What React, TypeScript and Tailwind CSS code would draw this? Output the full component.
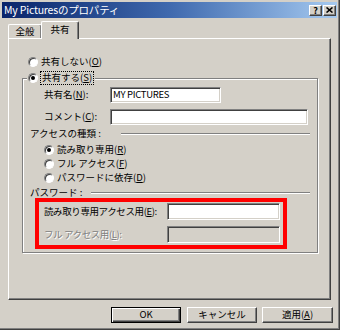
import React from "react";

const sunken =
  "border border-t-[#808080] border-l-[#808080] border-b-white border-r-white shadow-[inset_1px_1px_0_#404040,inset_-1px_-1px_0_#d4d0c8]";
const raised =
  "border border-t-white border-l-white border-b-[#404040] border-r-[#404040] shadow-[inset_-1px_-1px_0_#808080]";

function Radio({ checked }: { checked?: boolean }) {
  return (
    <div className="w-[10px] h-[10px] rounded-full bg-white border border-t-[#808080] border-l-[#808080] border-b-white border-r-white shadow-[inset_1px_1px_0_#404040] flex items-center justify-center shrink-0">
      {checked && <div className="w-[4px] h-[4px] rounded-full bg-black" />}
    </div>
  );
}

function U({ children }: { children: React.ReactNode }) {
  return <span className="underline underline-offset-1">{children}</span>;
}

function Sep({ gap }: { gap: string }) {
  return <div className={`flex-1 h-[2px] border-t border-t-[#808080] border-b border-b-white ${gap}`} />;
}

export default function App() {
  return (
    <div className="w-[340px] h-[330px] overflow-hidden bg-[#d4d0c8] text-black text-[9.5px] leading-none whitespace-nowrap font-['Noto_Sans_CJK_JP',sans-serif] border-r border-b border-r-[#404040] border-b-[#404040] shadow-[inset_-1px_-1px_0_#808080] flex flex-col pt-[2px]">
      {/* Title bar */}
      <div className="mx-[2px] h-[16px] bg-linear-to-r from-[#0a246a] via-[#3f69ae] to-[#a6caf0] flex items-center pl-[2px] pr-[1px]">
        <span className="text-white text-[10.5px] tracking-[-0.2px]">My Picturesのプロパティ</span>
        <div className="ml-auto flex gap-[1px]">
          <div className={`w-[13px] h-[11px] bg-[#d4d0c8] ${raised} flex items-center justify-center text-[9px] font-bold leading-none`}>?</div>
          <div className={`w-[13px] h-[11px] bg-[#d4d0c8] ${raised} flex items-center justify-center`}>
            <svg width="7" height="6" viewBox="0 0 7 6">
              <path d="M0.5 0.5 L6.5 5.5 M6.5 0.5 L0.5 5.5" stroke="black" strokeWidth="1.6" />
            </svg>
          </div>
        </div>
      </div>

      {/* Tabs */}
      <div className="mt-[3px] h-[17px] pl-[8px] flex items-end">
        <div className="w-[34px] h-[14px] border-t border-l border-t-white border-l-white border-r border-r-[#404040] shadow-[inset_-1px_0_0_#808080] rounded-t-[2px] flex items-center justify-center">
          全般
        </div>
        <div className="relative z-10 -ml-[1px] -mb-[1px] w-[38px] h-[18px] bg-[#d4d0c8] border-t border-l border-t-white border-l-white border-r border-r-[#404040] shadow-[inset_-1px_0_0_#808080] rounded-t-[2px] flex items-center justify-center pb-[1px]">
          共有
        </div>
      </div>

      {/* Panel */}
      <div className="mx-[8px] h-[262px] border border-t-white border-l-white border-r-[#404040] border-b-[#404040] shadow-[inset_-1px_-1px_0_#808080] flex flex-col">
        <div className="mt-[16px] ml-[19px] h-[14px] flex items-center gap-[3px]">
          <Radio />
          <span>
            共有しない(<U>O</U>)
          </span>
        </div>

        {/* Group box */}
        <div className="relative mt-[9px] ml-[13px] w-[296px] h-[175px] border border-[#808080] shadow-[inset_1px_1px_0_#fff,1px_1px_0_#fff] flex flex-col">
          <div className="absolute -top-[8px] left-[4px] h-[14px] bg-[#d4d0c8] flex items-center gap-[2px] px-[1px]">
            <Radio checked />
            <span className="border border-dotted border-black px-[1px] py-[1px]">
              共有する(<U>S</U>)
            </span>
          </div>

          <div className="mt-[8px] ml-[21px] flex items-center">
            <span className="w-[66px]">
              共有名(<U>N</U>):
            </span>
            <div className={`w-[111px] h-[16px] bg-white ${sunken} flex items-center pl-[2px] text-[9.5px] tracking-[-0.3px]`}>
              MY PICTURES
            </div>
          </div>

          <div className="mt-[6px] ml-[21px] flex items-center">
            <span className="w-[66px]">
              コメント(<U>C</U>):
            </span>
            <div className={`w-[198px] h-[16px] bg-white ${sunken}`} />
          </div>

          <div className="mt-[3px] ml-[7px] mr-[7px] h-[12px] flex items-center">
            <span>アクセスの種類 :</span>
            <Sep gap="ml-[20px]" />
          </div>

          <div className="mt-[3px] ml-[21px] flex flex-col">
            <div className="h-[14px] flex items-center gap-[3px]">
              <Radio checked />
              <span>
                読み取り専用(<U>R</U>)
              </span>
            </div>
            <div className="h-[14px] flex items-center gap-[3px]">
              <Radio />
              <span>
                フル アクセス(<U>F</U>)
              </span>
            </div>
            <div className="h-[14px] flex items-center gap-[3px]">
              <Radio />
              <span>
                パスワードに依存(<U>D</U>)
              </span>
            </div>
          </div>

          <div className="mt-[2px] ml-[7px] mr-[7px] h-[11px] flex items-center">
            <span>パスワード :</span>
            <Sep gap="ml-[9px]" />
          </div>

          {/* Highlight box */}
          <div className="ml-[12px] w-[252px] h-[51px] border-[4px] border-[#ff0000] flex flex-col pt-[1px] pl-[5px] gap-[6px]">
            <div className="flex items-center">
              <span className="w-[123px] tracking-[-0.4px]">
                読み取り専用アクセス用(<U>E</U>):
              </span>
              <div className={`w-[113px] h-[17px] bg-white ${sunken}`} />
            </div>
            <div className="flex items-center">
              <span className="w-[123px] tracking-[-0.4px] text-[#808080] [text-shadow:1px_1px_0_#fff]">
                フル アクセス用(<U>L</U>):
              </span>
              <div className={`w-[113px] h-[17px] bg-[#d4d0c8] ${sunken}`} />
            </div>
          </div>
        </div>
      </div>

      {/* Buttons */}
      <div className="mt-[7px] ml-[111px] flex">
        <div className="w-[70px] h-[16px] border border-black shadow-[inset_1px_1px_0_#fff,inset_-1px_-1px_0_#404040,inset_-2px_-2px_0_#808080] flex items-center justify-center">
          OK
        </div>
        <div className={`ml-[6px] w-[70px] h-[16px] ${raised} flex items-center justify-center`}>キャンセル</div>
        <div className={`ml-[5px] w-[71px] h-[16px] ${raised} flex items-center justify-center`}>
          適用(<U>A</U>)
        </div>
      </div>
    </div>
  );
}
